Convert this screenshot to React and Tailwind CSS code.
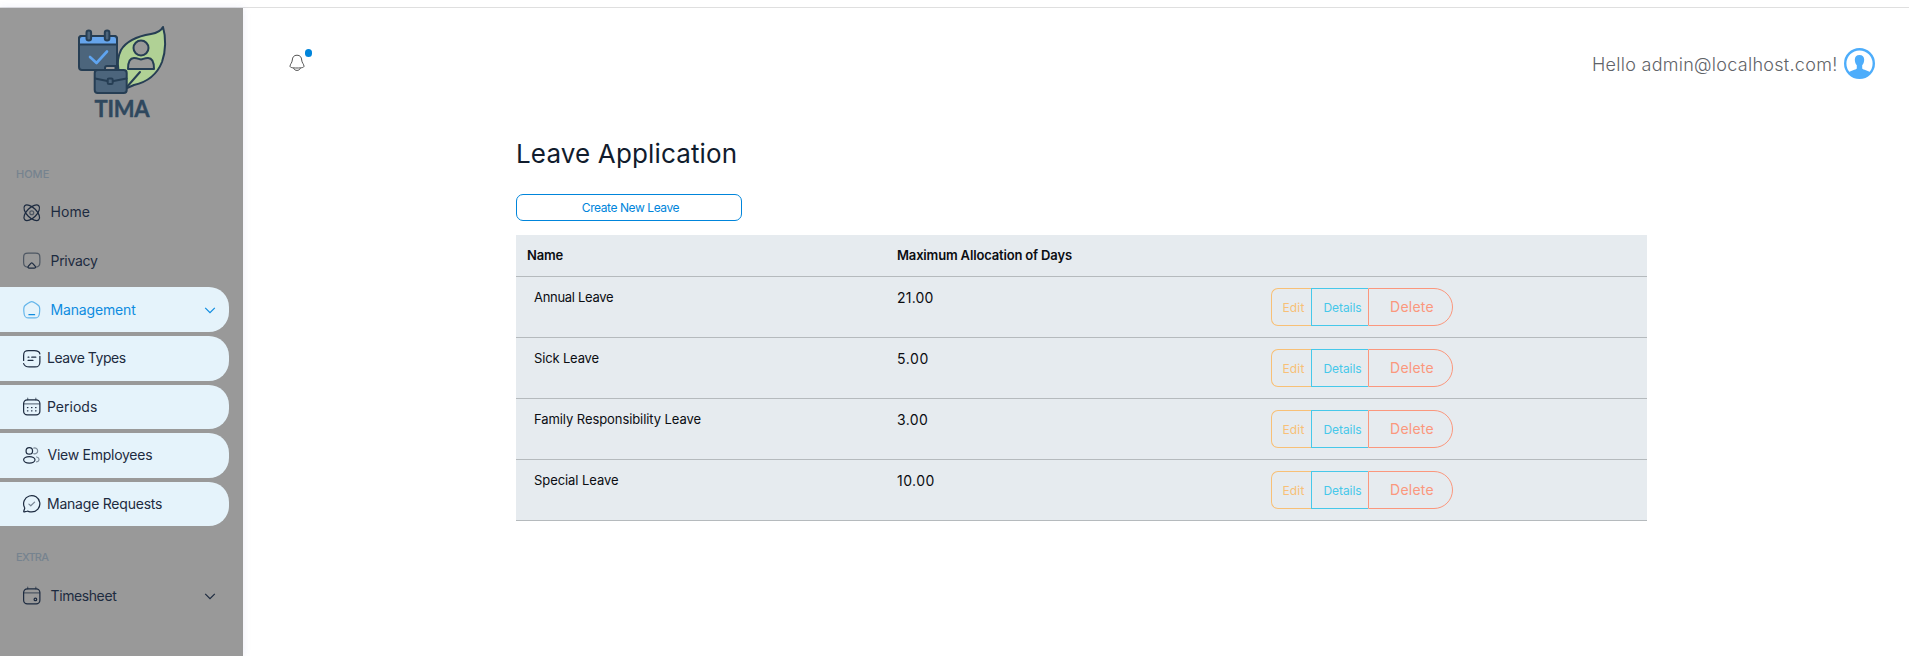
const icons = {
  atom: (
    <>
      <ellipse cx="12" cy="12" rx="6" ry="12.200" transform="rotate(45 12 12)" />
      <ellipse cx="12" cy="12" rx="6" ry="12.200" transform="rotate(-45 12 12)" />
      <circle cx="12" cy="12" r="2.400" opacity=".6" />
    </>
  ),
  airplay: (
    <>
      <path opacity=".6" d="M7 19.800C3.200 19.500 2 17.500 2 14V8.500C2 4 3 2.500 7.500 2.500h9c4.500 0 5.500 1.500 5.500 6V14c0 3.500-1.200 5.500-5 5.800" />
      <path d="M9.800 16.400c1-1.200 1.500-1.700 2.200-1.700s1.200.5 2.200 1.700l1.700 2c1.300 1.600.8 2.600-1.100 2.600H9.200c-1.900 0-2.400-1-1.100-2.600z" />
    </>
  ),
  home: (
    <>
      <path opacity=".6" d="M3 7.500C4 6 9.500 2 12 2s8 4 9 5.500c.9 1.600.9 6.300.3 10C20.600 21.200 19.500 22 16 22H8c-3.500 0-4.600-.8-5.300-4.500-.6-3.700-.6-8.400.3-10z" />
      <path d="M8.500 18h7" />
    </>
  ),
  notes: (
    <>
      <path d="M2 14V8c0-4.500 1.500-6 6-6h7c4.500 0 6.500 1 7 4" />
      <path d="M22 9v7c0 4.500-1.500 6-6 6H9c-4.500 0-6-1-7-4" />
      <path d="M7.500 10h1M12 10h5M7.500 14h6" />
    </>
  ),
  calendar: (
    <>
      <rect x="2" y="3.500" width="20" height="18.500" rx="4.500" />
      <path opacity=".6" d="M7 1.500v2M17 1.500v2M2.500 8.500h19" />
      <path d="M6.700 13h.6M11.700 13h.6M16.700 13h.6M6.700 17h.6M11.700 17h.6M16.700 17h.6" />
    </>
  ),
  users: (
    <>
      <circle cx="9" cy="6" r="4" />
      <ellipse cx="9" cy="17" rx="7" ry="4" />
      <path opacity=".5" d="M14.500 2.600a3.600 3.600 0 1 1 0 6.800M18 13.500c2 .5 3 1.700 3 3s-1 2.500-3 3" />
    </>
  ),
  chat: (
    <>
      <path d="M12 22a10 10 0 1 0-9-5.600c.3.500.4 1.100.2 1.700L2.200 21c-.2.800.1 1.100.8.900l3-.7c.6-.2 1.100-.1 1.700.1 1.300.5 2.800.7 4.300.7z" />
      <path opacity=".55" d="m8.500 12.500 2.300 2 4.700-4.500" />
    </>
  ),
  sheet: (
    <>
      <rect x="2" y="3.500" width="20" height="18.500" rx="4.500" />
      <path opacity=".6" d="M7 1.500v2M17 1.500v2M2.500 8.500h19" />
      <circle cx="16.500" cy="16.500" r="1.600" />
    </>
  ),
}

const menu = [
  { icon: 'atom', label: 'Home', text: 'ml-[9.5px] tracking-[0.1px]' },
  { icon: 'airplay', label: 'Privacy', text: 'ml-[9.5px] tracking-[-0.3px]' },
  { icon: 'home', label: 'Management', text: 'ml-[9.5px] tracking-[-0.15px]', active: true, arrow: true },
  { icon: 'notes', label: 'Leave Types', text: 'ml-[6px] tracking-[-0.45px]', sub: true },
  { icon: 'calendar', label: 'Periods', text: 'ml-[6px]', sub: true },
  { icon: 'users', label: 'View Employees', text: 'ml-[6.5px] tracking-[-0.26px]', sub: true },
  { icon: 'chat', label: 'Manage Requests', text: 'ml-[6px] tracking-[-0.22px]', sub: true },
]

const leaves = [
  { name: 'Annual Leave', days: '21.00', nameCls: 'tracking-[-0.3px]', daysCls: 'tracking-[0.2px]' },
  { name: 'Sick Leave', days: '5.00', nameCls: 'tracking-[-0.16px]', daysCls: 'tracking-[0.6px]' },
  { name: 'Family Responsibility Leave', days: '3.00', nameCls: 'tracking-[-0.08px]', daysCls: 'tracking-[0.4px]' },
  { name: 'Special Leave', days: '10.00', nameCls: 'tracking-[-0.07px]', daysCls: 'tracking-[0.45px]' },
]

function Icon({ name }) {
  return (
    <svg viewBox="0 0 24 24" className="size-[19.5px] shrink-0" fill="none" stroke="currentColor" strokeWidth="1.5" strokeLinecap="round" strokeLinejoin="round">
      {icons[name]}
    </svg>
  )
}

function Chevron() {
  return (
    <svg viewBox="0 0 12 8" className="ml-auto mr-[13px] h-2 w-3" fill="none" stroke="currentColor" strokeWidth="1.200">
      <path d="m1.200 1.800 4.800 4.900 4.800-4.900" />
    </svg>
  )
}

function MenuItem({ icon, label, text, active, sub, arrow }) {
  const tone = active ? 'bg-[#e5f3fb] text-[#0e8ce0]' : sub ? 'bg-[#e5f3fb] text-[#1d2b40]' : 'text-[#1d2b40]'
  return (
    <li className={`mb-1 flex h-[44.6px] w-[229px] items-center rounded-r-[20px] pl-[21.5px] text-sm ${tone}`}>
      <Icon name={icon} />
      <span className={text}>{label}</span>
      {arrow && <Chevron />}
    </li>
  )
}

function Logo() {
  return (
    <svg viewBox="0 0 104 104" className="ml-[70px] size-[104px]" stroke="#263e54" strokeWidth="2" strokeLinecap="round" strokeLinejoin="round">
      <path d="M57 68C48 58 45 42 51 30c6-10 18-14 30-16 6-1 10-3 12-7 3 10 3 24-1 35-6 15-19 21-28 23z" fill="#b0d195" />
      <path d="m56 68 14-16" />
      <circle cx="71" cy="28" r="7.500" fill="#999" />
      <path d="M58 49c0-6 1-11 6-11 4 0 5 1.500 7 1.500s3-1.500 7-1.500c5 0 6 5 6 11z" fill="#999" />
      <rect x="9" y="16" width="38" height="34" rx="3" fill="#4c657c" />
      <path d="M9 24.500v-5.500a3 3 0 0 1 3-3h32a3 3 0 0 1 3 3v5.500z" fill="#66a5ec" />
      <rect x="16.500" y="10.500" width="4.600" height="10" rx="2.300" fill="#4c657c" />
      <rect x="34.800" y="10.500" width="4.600" height="10" rx="2.300" fill="#4c657c" />
      <path d="m20 37 6.500 6L37 31.500" fill="none" stroke="#5fa4f0" strokeWidth="2.600" />
      <path d="M35 50v-2a2 2 0 0 1 2-2h8.500v4" fill="#999" />
      <rect x="24.700" y="50" width="32" height="23" rx="3" fill="#4c657c" />
      <path d="m25 58.500 12.500 2.500m6 0 13-2.500" fill="none" />
      <rect x="37.700" y="58.500" width="5" height="5.500" rx="1.300" fill="#4c657c" />
      <text x="52" y="97" textAnchor="middle" textLength="55" stroke="#2f485e" strokeWidth=".4" fill="#2f485e" fontFamily="Lato, sans-serif" fontWeight="700" fontSize="22">TIMA</text>
    </svg>
  )
}

function Actions() {
  return (
    <div className="flex h-[38px] text-xs">
      <button className="h-[38px] w-10 rounded-l-[7px] border border-r-0 border-[#f8c076] pt-0.5 pl-1 text-[#f8c076] tracking-[0.2px]">Edit</button>
      <button className="h-[38px] w-[57px] border border-r-0 border-[#46c8ea] pt-0.5 pl-[5px] text-[#46c8ea] tracking-[-0.05px]">Details</button>
      <button className="h-[38px] w-[85px] rounded-r-[19px] border border-[#fb977d] pl-[3px] text-sm text-[#fb977d] tracking-[0.25px]">Delete</button>
    </div>
  )
}

export default function App() {
  return (
    <div className="flex h-[656px] flex-col overflow-hidden bg-white font-[Inter,sans-serif]">
      <div className="h-2 shrink-0 border-b border-[#dfdfdf]" />
      <div className="flex flex-1">
        <aside className="w-[243px] shrink-0 bg-[#999] pt-3 shadow-[0_0_8px_rgba(90,100,200,0.12)]">
          <Logo />
          <h6 className="mt-[42px] pl-4 text-[11px] leading-4 font-medium text-[#76838f]">HOME</h6>
          <ul className="mt-[8.2px]">
            {menu.map((m) => (
              <MenuItem key={m.label} {...m} />
            ))}
          </ul>
          <h6 className="mt-[18.2px] pt-1 pl-4 text-[11px] leading-4 font-medium text-[#76838f] tracking-[-0.75px]">EXTRA</h6>
          <ul className="mt-[9px]">
            <li className="flex h-[44.6px] w-[229px] items-center pl-[21.5px] text-sm text-[#1d2b40]">
              <Icon name="sheet" />
              <span className="ml-[9.5px] tracking-[-0.4px]">Timesheet</span>
              <Chevron />
            </li>
          </ul>
        </aside>
        <main className="flex-1">
          <header className="flex h-[112px] items-center justify-between pr-[34px] pl-[45px]">
            <div className="relative -mt-0.5">
              <svg viewBox="0 0 18 18" className="size-[18px]" fill="none" stroke="#555" strokeWidth="1">
                <path d="M9 1.200c-3.200 0-4.500 2-4.700 4.800-.1 2.800-2.300 4.200-2.300 6.200 0 1.400 2.500 1.800 7 1.800s7-.4 7-1.800c0-2-2.200-3.400-2.300-6.200C13.500 3.200 12.200 1.200 9 1.200z" />
                <path d="M5.500 14.200c.8 1.500 2 2.200 3.500 2.200s2.700-.7 3.500-2.200" />
              </svg>
              <span className="absolute -top-[5px] left-[17px] h-2 w-[7px] rounded-full bg-[#0085db]" />
            </div>
            <div className="flex items-center">
              <span className="mr-[6.5px] pt-px text-lg font-light text-[#5f6368] tracking-[0.28px]">Hello admin@localhost.com!</span>
              <svg viewBox="0 0 31 31" className="-mt-px size-[31px]">
                <circle cx="15.500" cy="15.500" r="14.300" fill="#fff" stroke="#4dadfb" strokeWidth="2.400" />
                <path d="M15.500 7c3 0 4.700 1.800 4.700 4.600 0 2.600-.9 4.600-2 5.700v3.200c1 1.400 6 1.700 8.300 4.200-2.500 3.300-6.500 5.300-11 5.300s-8.500-2-11-5.300c2.300-2.500 7.300-2.800 8.300-4.200v-3.200c-1.100-1.100-2-3.100-2-5.700C10.800 8.800 12.500 7 15.500 7z" fill="#4dadfb" />
              </svg>
            </div>
          </header>
          <section className="ml-[273px] w-[1131px]">
            <h2 className="pt-[18px] text-[26px] leading-8 tracking-[0.15px] text-[#111c2d]">Leave Application</h2>
            <button className="mt-6 block h-[27px] w-[226px] rounded-[7px] border border-[#0085db] pl-[3px] text-xs text-[#0085db] tracking-[-0.42px]">Create New Leave</button>
            <table className="mt-[14px] w-full table-fixed border-collapse bg-[#e6ebef] text-left text-[13px] text-[#0b0d12]">
              <colgroup>
                <col className="w-[370px]" />
                <col className="w-[374px]" />
                <col />
              </colgroup>
              <thead>
                <tr className="h-[41px] border-b border-[#b5babd]">
                  <th className="pl-[11px] font-semibold tracking-[-0.18px]">Name</th>
                  <th className="pl-[11px] font-semibold tracking-[-0.16px]">Maximum Allocation of Days</th>
                  <th />
                </tr>
              </thead>
              <tbody>
                {leaves.map((l) => (
                  <tr key={l.name} className="h-[61px] border-b border-[#b5babd] align-top">
                    <td className={`pt-[11px] pl-[18px] ${l.nameCls}`}>{l.name}</td>
                    <td className={`pt-[11px] pl-[11px] text-sm ${l.daysCls}`}>{l.days}</td>
                    <td className="pt-[11px] pl-[11px]"><Actions /></td>
                  </tr>
                ))}
              </tbody>
            </table>
          </section>
        </main>
      </div>
    </div>
  )
}
